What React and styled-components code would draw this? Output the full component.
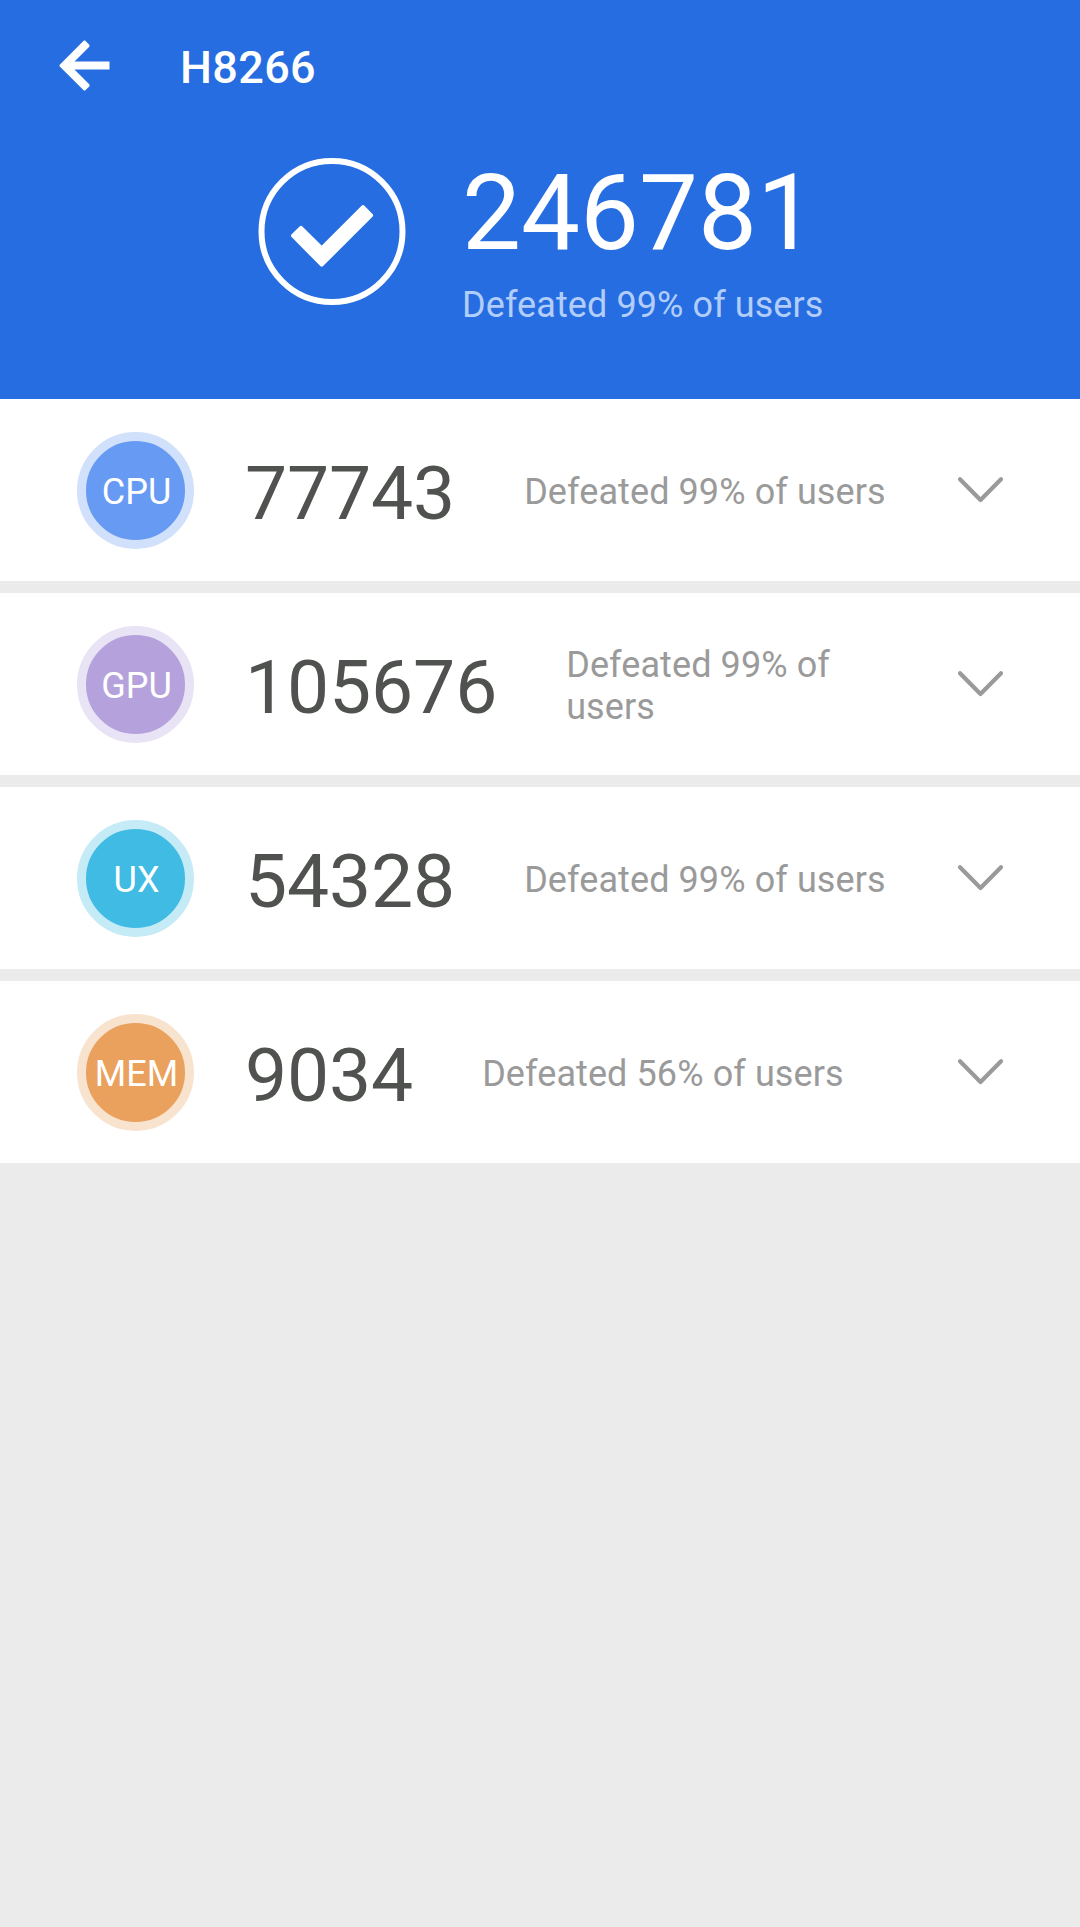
import React from 'react'
import styled, { createGlobalStyle } from 'styled-components'

const scores = [
  { name: 'CPU', score: '77743', percent: 99, color: '#679af3', ring: '#d1e0fb' },
  { name: 'GPU', score: '105676', percent: 99, color: '#b5a2dc', ring: '#e8e3f5' },
  { name: 'UX', score: '54328', percent: 99, color: '#40bbe3', ring: '#c5ebf6' },
  { name: 'MEM', score: '9034', percent: 56, color: '#e9a15d', ring: '#f8e3cf' },
]

export default function App() {
  return (
    <Page>
      <GlobalStyle />
      <Header>
        <TitleBar>
          <BackButton aria-label="Back">
            <svg width="75" height="75" viewBox="0 0 24 24" fill="#fff">
              <path d="M20 10.72H8.8L13.6 5.9V5.4L12.2 4H11.8L4 11.8V12.2L11.8 20H12.2L13.6 18.6V18.1L8.8 13.28H20z" />
            </svg>
          </BackButton>
          <Title>H8266</Title>
        </TitleBar>
        <Summary>
          <CheckIcon />
          <div>
            <Total>246781</Total>
            <TotalText>Defeated 99% of users</TotalText>
          </div>
        </Summary>
      </Header>
      <ScoreList>
        {scores.map((item) => (
          <ScoreRow key={item.name}>
            <Badge $color={item.color} $ring={item.ring}>
              <BadgeText>{item.name}</BadgeText>
            </Badge>
            <Score>{item.score}</Score>
            <Description>{`Defeated ${item.percent}% of users`}</Description>
            <Chevron />
          </ScoreRow>
        ))}
      </ScoreList>
    </Page>
  )
}

function CheckIcon() {
  return (
    <svg width="148" height="148" viewBox="0 0 148 148" fill="none">
      <circle cx="74" cy="73.5" r="70.5" stroke="#fff" strokeWidth="6" />
      <path
        d="M35 77.7L43 69.9L63.7 90.3L105 49.2L113.1 57.3L63.7 106.7Z"
        fill="#fff"
        stroke="#fff"
        strokeWidth="4"
        strokeLinejoin="round"
      />
    </svg>
  )
}

function Chevron() {
  return (
    <svg width="46" height="26" viewBox="0 0 46 26" fill="none">
      <path
        d="M2 2.2L22.5 22.9L43 2.2"
        stroke="#9a9a9a"
        strokeWidth="4.2"
        strokeLinecap="round"
        strokeLinejoin="round"
      />
    </svg>
  )
}

const GlobalStyle = createGlobalStyle`
  * {
    box-sizing: border-box;
  }
  body {
    margin: 0;
    background: #ebebeb;
    font-family: Roboto, sans-serif;
  }
  svg {
    display: block;
    flex-shrink: 0;
    overflow: visible;
  }
`

const Page = styled.div`
  min-height: 1927px;
  background: #ebebeb;
`

const Header = styled.header`
  height: 399px;
  background: #256de0;
  color: #fff;
`

const TitleBar = styled.div`
  display: flex;
  align-items: center;
  height: 132px;
  padding-left: 47px;
`

const BackButton = styled.button`
  padding: 0 0 1px;
  border: 0;
  background: none;
`

const Title = styled.h1`
  margin: 2px 0 0 58px;
  font-size: 45px;
  font-weight: 500;
  line-height: 53px;
  letter-spacing: 0.35px;
`

const Summary = styled.div`
  display: flex;
  padding: 26px 0 0 258px;

  > div {
    margin: -6px 0 0 56px;
  }
`

const Total = styled.div`
  font-size: 105px;
  line-height: 124px;
`

const TotalText = styled.div`
  margin-top: 8px;
  font-size: 36px;
  line-height: 42px;
  letter-spacing: 0.09px;
  color: #b3cdfb;
`

const ScoreList = styled.main`
  display: flex;
  flex-direction: column;
  gap: 12px;
`

const ScoreRow = styled.section`
  display: flex;
  align-items: center;
  height: 182px;
  padding: 0 76px 0 77px;
  background: #fff;
`

const Badge = styled.div`
  display: flex;
  align-items: center;
  justify-content: center;
  flex-shrink: 0;
  width: 117px;
  height: 117px;
  border: 9px solid ${(props) => props.$ring};
  border-radius: 50%;
  background: ${(props) => props.$color};
`

const BadgeText = styled.span`
  padding: 4px 0 0 2px;
  font-size: 36px;
  line-height: 42px;
  color: #fff;
`

const Score = styled.div`
  margin-left: 51px;
  padding-top: 5px;
  font-size: 75px;
  line-height: 88px;
  letter-spacing: -0.12px;
  color: #50524f;
`

const Description = styled.div`
  flex: 1;
  margin: 0 48px 0 69px;
  padding-top: 4px;
  font-size: 36px;
  line-height: 42px;
  letter-spacing: 0.09px;
  color: #9a9a9a;
`
